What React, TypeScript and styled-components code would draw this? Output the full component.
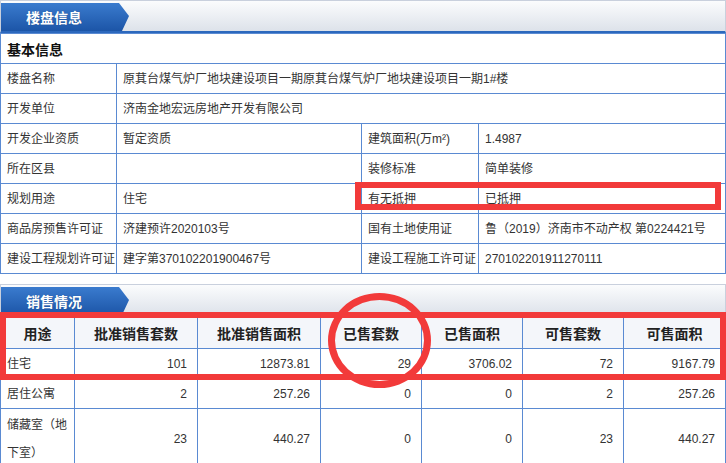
import React from 'react';
import styled, { createGlobalStyle } from 'styled-components';

const GlobalStyle = createGlobalStyle`
  html, body { margin: 0; padding: 0; background: #fff; }
  body {
    font-family: "Liberation Sans", "Noto Sans CJK SC", sans-serif;
    font-size: 12px;
    color: #333;
  }
`;

const Page = styled.div`
  position: relative;
  width: 726px;
  height: 463px;
  overflow: hidden;
`;

const SectionBar = styled.div<{ $gap?: number }>`
  display: flex;
  align-items: flex-end;
  height: 29px;
  padding-top: 1px;
  margin-top: ${(p) => p.$gap ?? 0}px;
  border-top: 1px solid #c9d0dd;
  border-right: 1px solid #c9d0dd;
  border-left: 1px solid #c9d0dd;
  border-bottom: 2px solid #2c68bd;
  background: linear-gradient(#fbfcfd, #dde2ea);
`;

const Tab = styled.div`
  width: 129px;
  height: 28px;
  box-sizing: border-box;
  padding-left: 25px;
  display: flex;
  align-items: center;
  color: #fff;
  font-family: "Noto Sans CJK SC", sans-serif;
  font-weight: 700;
  font-size: 14px;
  text-shadow: 0 0 1px rgba(0, 0, 0, 0.25);
  background: linear-gradient(#3a7bce, #1c55a7);
  clip-path: polygon(0 0, 118px 0, 128px 13px, 121px 28px, 0 28px);
`;

const Table = styled.table`
  width: 725px;
  border-collapse: collapse;
  table-layout: fixed;
`;

const Cell = styled.td<{ $align?: 'left' | 'right' | 'center' }>`
  border: 1px solid #5a8ad2;
  height: 29px;
  padding: 0 ${(p) => (p.$align === 'right' ? '10px' : '3px')} 0 6px;
  line-height: 28px;
  text-align: ${(p) => p.$align ?? 'left'};
  vertical-align: middle;
  color: #333;
  word-break: break-all;
`;

const LabelCell = styled(Cell)`
  white-space: nowrap;
  overflow: visible;
  padding-right: 0;
`;

const TitleCell = styled.td`
  border: 1px solid #5a8ad2;
  height: 29px;
  padding: 0 6px;
  font-family: "Noto Sans CJK SC", sans-serif;
  font-weight: 700;
  font-size: 14px;
  color: #111;
`;

const HeadCell = styled.th`
  border: 1px solid #5a8ad2;
  height: 30px;
  padding: 0;
  background: #f4f6fa;
  font-family: "Noto Sans CJK SC", sans-serif;
  font-weight: 700;
  font-size: 14px;
  color: #222;
  text-align: center;
`;

const TallCell = styled(Cell)`
  padding-top: 2px;
  padding-bottom: 2px;
`;

const RedBox = styled.div<{ $x: number; $y: number; $w: number; $h: number }>`
  position: absolute;
  left: ${(p) => p.$x}px;
  top: ${(p) => p.$y}px;
  width: ${(p) => p.$w}px;
  height: ${(p) => p.$h}px;
  box-sizing: border-box;
  border: 6px solid #f23a3a;
  pointer-events: none;
`;

const RedCircle = styled(RedBox)`
  border-width: 7px;
  border-radius: 50%;
`;

const salesRows = [
  { use: '住宅', a: '101', b: '12873.81', c: '29', d: '3706.02', e: '72', f: '9167.79' },
  { use: '居住公寓', a: '2', b: '257.26', c: '0', d: '0', e: '2', f: '257.26' },
  { use: '储藏室（地下室）', a: '23', b: '440.27', c: '0', d: '0', e: '23', f: '440.27', tall: true },
];

export default function App() {
  return (
    <Page>
      <GlobalStyle />
      <SectionBar>
        <Tab>楼盘信息</Tab>
      </SectionBar>
      <Table>
        <colgroup>
          <col style={{ width: 116 }} />
          <col style={{ width: 245 }} />
          <col style={{ width: 117 }} />
          <col style={{ width: 247 }} />
        </colgroup>
        <tbody>
          <tr>
            <TitleCell colSpan={4}>基本信息</TitleCell>
          </tr>
          <tr>
            <LabelCell>楼盘名称</LabelCell>
            <Cell colSpan={3}>原萁台煤气炉厂地块建设项目一期原萁台煤气炉厂地块建设项目一期1#楼</Cell>
          </tr>
          <tr>
            <LabelCell>开发单位</LabelCell>
            <Cell colSpan={3}>济南金地宏远房地产开发有限公司</Cell>
          </tr>
          <tr>
            <LabelCell>开发企业资质</LabelCell>
            <Cell>暂定资质</Cell>
            <LabelCell>建筑面积(万m²)</LabelCell>
            <Cell>1.4987</Cell>
          </tr>
          <tr>
            <LabelCell>所在区县</LabelCell>
            <Cell></Cell>
            <LabelCell>装修标准</LabelCell>
            <Cell>简单装修</Cell>
          </tr>
          <tr>
            <LabelCell>规划用途</LabelCell>
            <Cell>住宅</Cell>
            <LabelCell>有无抵押</LabelCell>
            <Cell>已抵押</Cell>
          </tr>
          <tr>
            <LabelCell>商品房预售许可证</LabelCell>
            <Cell>济建预许2020103号</Cell>
            <LabelCell>国有土地使用证</LabelCell>
            <Cell>鲁（2019）济南市不动产权 第0224421号</Cell>
          </tr>
          <tr>
            <LabelCell>建设工程规划许可证</LabelCell>
            <Cell>建字第370102201900467号</Cell>
            <LabelCell>建设工程施工许可证</LabelCell>
            <Cell>270102201911270111</Cell>
          </tr>
        </tbody>
      </Table>

      <SectionBar $gap={10}>
        <Tab>销售情况</Tab>
      </SectionBar>
      <Table>
        <colgroup>
          <col style={{ width: 74 }} />
          <col style={{ width: 123 }} />
          <col style={{ width: 123 }} />
          <col style={{ width: 101 }} />
          <col style={{ width: 101 }} />
          <col style={{ width: 101 }} />
          <col style={{ width: 102 }} />
        </colgroup>
        <thead>
          <tr>
            <HeadCell>用途</HeadCell>
            <HeadCell>批准销售套数</HeadCell>
            <HeadCell>批准销售面积</HeadCell>
            <HeadCell>已售套数</HeadCell>
            <HeadCell>已售面积</HeadCell>
            <HeadCell>可售套数</HeadCell>
            <HeadCell>可售面积</HeadCell>
          </tr>
        </thead>
        <tbody>
          {salesRows.map((r) => {
            const C = r.tall ? TallCell : Cell;
            return (
              <tr key={r.use}>
                <C>{r.use}</C>
                <C $align="right">{r.a}</C>
                <C $align="right">{r.b}</C>
                <C $align="right">{r.c}</C>
                <C $align="right">{r.d}</C>
                <C $align="right">{r.e}</C>
                <C $align="right">{r.f}</C>
              </tr>
            );
          })}
        </tbody>
      </Table>

      <RedBox $x={355} $y={182} $w={366} $h={28} />
      <RedBox $x={0} $y={312} $w={726} $h={68} />
      <RedCircle $x={328} $y={293} $w={103} $h={95} />
    </Page>
  );
}
